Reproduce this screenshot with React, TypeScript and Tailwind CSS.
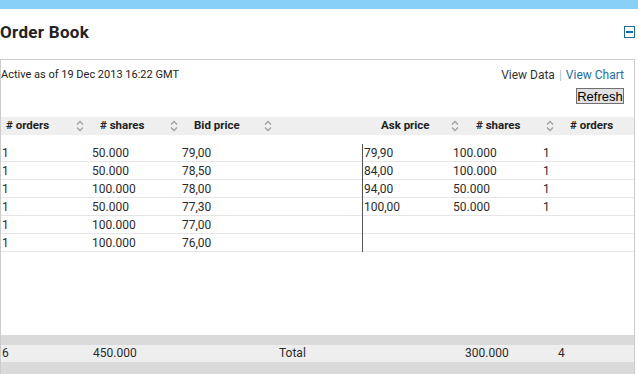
import React from "react";

const bids = [
  { orders: "1", shares: "50.000", price: "79,00" },
  { orders: "1", shares: "50.000", price: "78,50" },
  { orders: "1", shares: "100.000", price: "78,00" },
  { orders: "1", shares: "50.000", price: "77,30" },
  { orders: "1", shares: "100.000", price: "77,00" },
  { orders: "1", shares: "100.000", price: "76,00" },
];

const asks = [
  { price: "79,90", shares: "100.000", orders: "1" },
  { price: "84,00", shares: "100.000", orders: "1" },
  { price: "94,00", shares: "50.000", orders: "1" },
  { price: "100,00", shares: "50.000", orders: "1" },
];

const SortIcon: React.FC = () => (
  <svg width="8" height="12" viewBox="0 0 8 12" fill="none">
    <path d="M1 4.5 L4 1.5 L7 4.5" stroke="#a0a0a0" strokeWidth="1.3" />
    <path d="M1 7.5 L4 10.5 L7 7.5" stroke="#a0a0a0" strokeWidth="1.3" />
  </svg>
);

const HeaderCell: React.FC<{ label: string; sort?: boolean; pl?: string }> = ({
  label,
  sort = true,
  pl = "pl-[5px]",
}) => (
  <div className={`flex items-center ${pl}`}>
    <span className="w-[70px] font-bold">{label}</span>
    {sort && <SortIcon />}
  </div>
);

const App: React.FC = () => {
  return (
    <div
      className="w-[638px] h-[374px] overflow-hidden bg-white text-[#2b2b2b]"
      style={{ fontFamily: "Roboto, 'Liberation Sans', sans-serif" }}
    >
      <div className="h-[9px] bg-[#88d0f5]" />

      <div className="h-[50px] flex items-start justify-between pt-[12px] pr-[3px]">
        <h1 className="text-[17px] leading-[22px] font-bold text-[#222] tracking-[0.3px]">
          Order Book
        </h1>
        <div className="mt-[5px] w-[11px] h-[12px] border-[1.5px] border-[#1d6b9b] flex items-center justify-center">
          <div className="w-[7px] h-[2px] bg-[#1d6b9b]" />
        </div>
      </div>

      <div className="w-[635px] border-t border-l border-r border-[#cccccc]">
        <div className="h-[57px] flex justify-between pr-[10px]">
          <div className="pt-[8px] text-[11px] leading-[14px] text-[#222]">
            Active as of 19 Dec 2013 16:22 GMT
          </div>
          <div className="pt-[8px] flex flex-col items-end">
            <div className="text-[12px] leading-[14px]">
              <span className="text-[#333]">View Data</span>
              <span className="text-[#9cc4dc] px-[4px]">|</span>
              <span className="text-[#1d6fa3]">View Chart</span>
            </div>
            <button
              className="mt-[6px] h-[16px] w-[48px] px-0 bg-[#e1e1e1] border border-[#707070] text-[13px] leading-[13px] text-black"
              style={{ fontFamily: "'Liberation Sans', Arial, sans-serif" }}
            >
              Refresh
            </button>
          </div>
        </div>

        <div className="h-[18px] bg-[#efefef] grid grid-cols-[94px_94px_94px_94px_94px_94px_1fr] text-[11.5px] text-[#222]">
          <HeaderCell label="# orders" />
          <HeaderCell label="# shares" />
          <HeaderCell label="Bid price" />
          <div />
          <HeaderCell label="Ask price" pl="pl-[4px]" />
          <HeaderCell label="# shares" />
          <HeaderCell label="# orders" sort={false} />
        </div>

        <div className="h-[9px]" />

        {bids.map((b, i) => {
          const a = asks[i];
          return (
            <div
              key={i}
              className="h-[18px] grid grid-cols-[90px_90px_90px_91px_90px_90px_1fr] border-b border-[#e6e6e6] text-[12px] leading-[17px]"
            >
              <div className="pl-px pt-px">{b.orders}</div>
              <div className="pl-px pt-px">{b.shares}</div>
              <div className="pl-px pt-px">{b.price}</div>
              <div />
              <div className="pl-px pt-px border-l border-[#555]">{a?.price}</div>
              <div className="pl-px pt-px">{a?.shares}</div>
              <div className="pl-px pt-px">{a?.orders}</div>
            </div>
          );
        })}

        <div className="h-[83px]" />

        <div className="h-[10px] bg-[#dadada]" />
        <div className="h-[17px] bg-[#eeeeee] grid grid-cols-[92px_186px_186px_93px_1fr] text-[12px] leading-[17px]">
          <div className="pl-px">6</div>
          <div>450.000</div>
          <div>Total</div>
          <div>300.000</div>
          <div>4</div>
        </div>
        <div className="h-[20px] bg-[#dadada]" />
      </div>
    </div>
  );
};

export default App;
